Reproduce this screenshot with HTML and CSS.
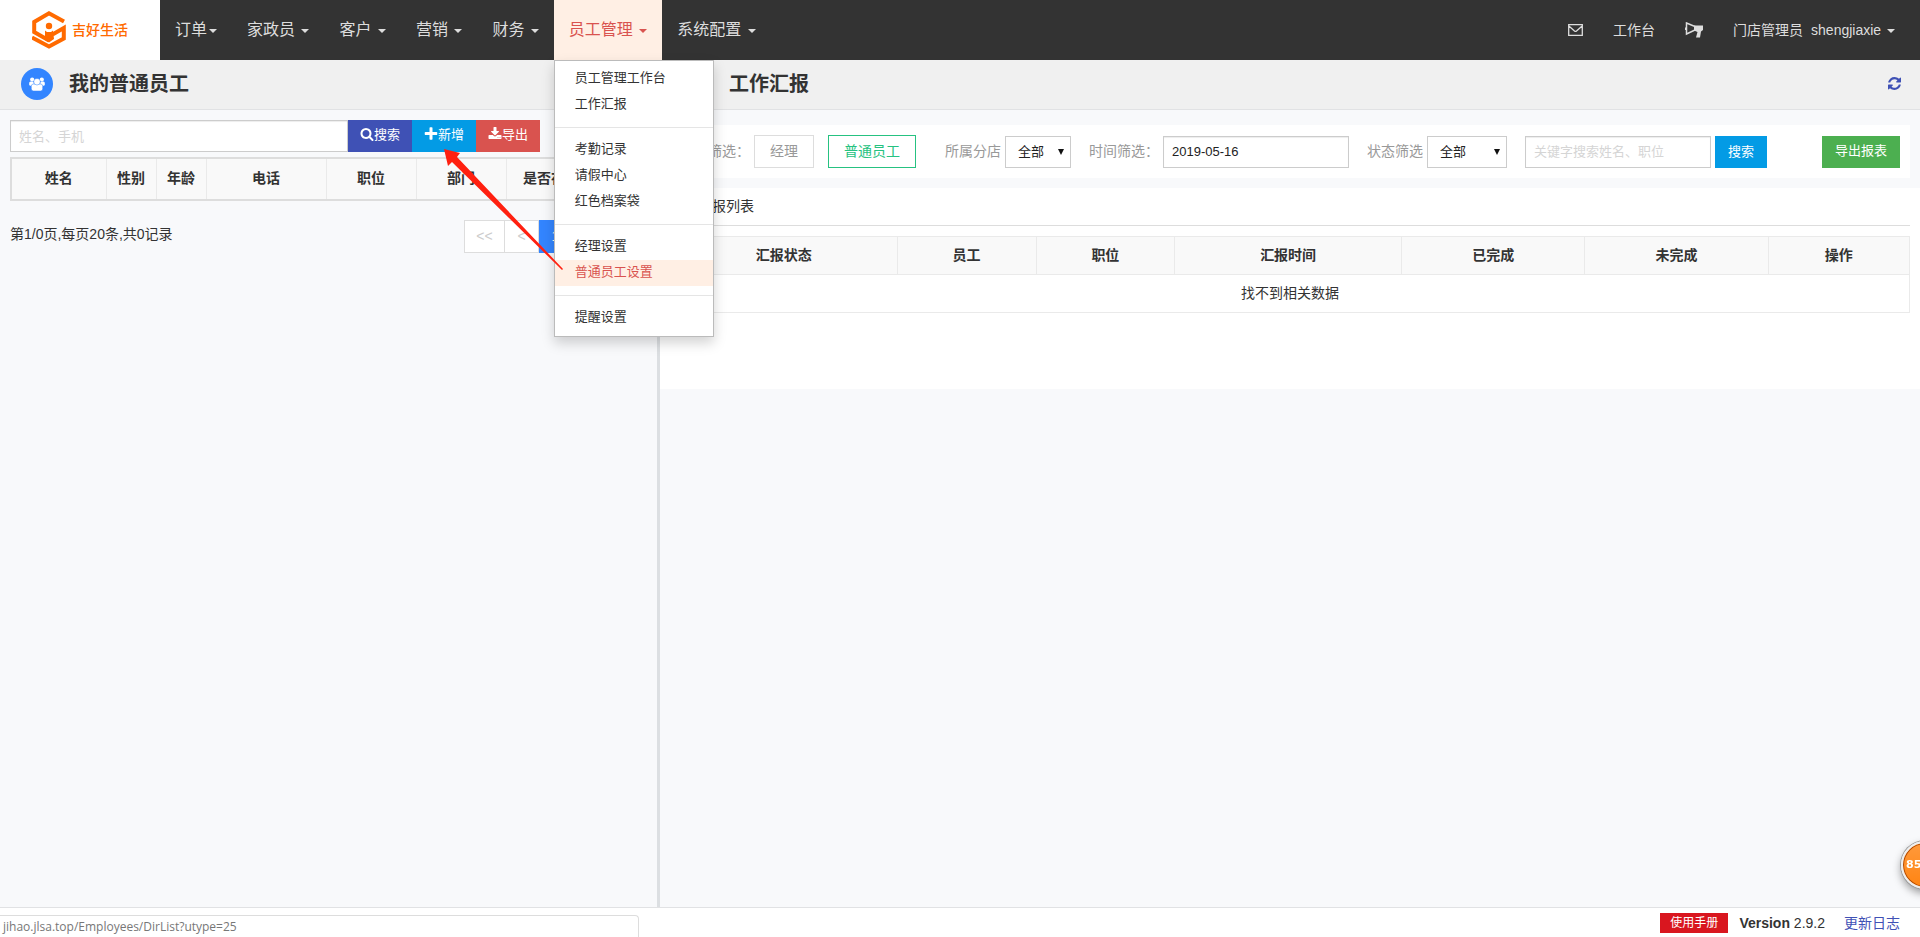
FILE: index.html
```html
<!DOCTYPE html>
<html lang="zh-CN">
<head>
<meta charset="utf-8">
<title>工作汇报</title>
<link rel="stylesheet" href="styles.css">
</head>
<body>
<header class="topbar">
  <a class="brand" href="#">
    <svg class="brand-mark" viewBox="0 0 34 38" aria-hidden="true">
      <path d="M32 10.500 17 2.300 2.200 11V21L17 29.500" fill="none" stroke="#ff6a00" stroke-width="4"/>
      <path d="M0 26.500 17 35.500 31.800 27.500V17L20.500 23.500" fill="none" stroke="#ff6a00" stroke-width="4"/>
      <circle cx="17" cy="15" r="3.200" fill="#ff6a00"/>
      <path d="M13 19.500 15 21H19L21 19.500 22 28 17 31.500 13 29Z" fill="#ff6a00"/>
    </svg>
    <span>吉好生活</span>
  </a>
  <nav class="menu">
    <a class="menu-item" href="#">订单<i class="caret"></i></a>
    <a class="menu-item" href="#">家政员 <i class="caret"></i></a>
    <a class="menu-item" href="#">客户 <i class="caret"></i></a>
    <a class="menu-item" href="#">营销 <i class="caret"></i></a>
    <a class="menu-item" href="#">财务 <i class="caret"></i></a>
    <div class="menu-group">
      <a class="menu-item active" href="#">员工管理 <i class="caret"></i></a>
      <div class="dropdown">
        <a href="#">员工管理工作台</a>
        <a href="#">工作汇报</a>
        <hr>
        <a href="#">考勤记录</a>
        <a href="#">请假中心</a>
        <a href="#">红色档案袋</a>
        <hr>
        <a href="#">经理设置</a>
        <a class="active" href="#">普通员工设置</a>
        <hr>
        <a href="#">提醒设置</a>
      </div>
    </div>
    <a class="menu-item" href="#">系统配置 <i class="caret"></i></a>
  </nav>
  <nav class="tools">
    <a href="#" aria-label="消息"><svg class="mail" viewBox="0 0 15 12"><path d="M.7 .7h13.600v10.600H.7zM.9 2l5.600 5q1 .8 2 0l5.600-5" fill="none" stroke="currentColor" stroke-width="1.300"/></svg></a>
    <a href="#">工作台</a>
    <a href="#" aria-label="公告"><svg class="horn" viewBox="0 0 18 16"><path d="M1.500 1 10 4.500V8L1.500 12Z" fill="none" stroke="currentColor" stroke-width="1.500"/><path d="M0 5.500h2v2.500H0zM9 3.500h9v4.500l-2 1.500-1 6h-4l1.500-5.500L9 8.500z" fill="currentColor"/></svg></a>
    <a class="account" href="#"><span>门店管理员</span><span>shengjiaxie <i class="caret"></i></span></a>
  </nav>
</header>

<main class="panes">
  <section class="pane staff">
    <div class="pane-head">
      <span class="round"><svg viewBox="0 0 16 14"><g fill="#fff"><circle cx="3.200" cy="2.500" r="2.100"/><circle cx="12.800" cy="2.500" r="2.100"/><rect x=".2" y="4.600" width="4.600" height="4.200" rx="1.500"/><rect x="11.200" y="4.600" width="4.600" height="4.200" rx="1.500"/></g><g fill="#fff" stroke="#3385ff" stroke-width=".5"><rect x="2.300" y="7" width="11.400" height="7" rx="2.200"/><circle cx="8" cy="4.700" r="3.300"/></g></svg></span>
      <h1>我的普通员工</h1>
    </div>
    <div class="staff-body">
      <form class="search-row">
        <input class="field grow" type="text" placeholder="姓名、手机" aria-label="姓名、手机">
        <button class="btn indigo" type="button"><svg viewBox="0 0 1792 1792"><path d="M1216 832q0-185-131.500-316.500t-316.500-131.500-316.500 131.500-131.500 316.500 131.500 316.500 316.500 131.500 316.500-131.500 131.500-316.500zm512 832q0 52-38 90t-90 38q-54 0-90-38l-343-342q-179 124-399 124-143 0-273.500-55.500t-225-150-150-225-55.500-273.500 55.500-273.500 150-225 225-150 273.500-55.500 273.500 55.500 225 150 150 225 55.500 273.500q0 220-124 399l343 343q37 37 37 90z"/></svg>搜索</button>
        <button class="btn blue" type="button"><svg viewBox="0 0 1792 1792"><path d="M1700 736v192q0 40-28 68t-68 28h-516v516q0 40-28 68t-68 28h-192q-40 0-68-28t-28-68v-516h-516q-40 0-68-28t-28-68v-192q0-40 28-68t68-28h516v-516q0-40 28-68t68-28h192q40 0 68 28t28 68v516h516q40 0 68 28t28 68z"/></svg>新增</button>
        <button class="btn red" type="button"><svg viewBox="0 0 1792 1792"><path d="M1344 1344q0-26-19-45t-45-19-45 19-19 45 19 45 45 19 45-19 19-45zm256 0q0-26-19-45t-45-19-45 19-19 45 19 45 45 19 45-19 19-45zm128-224v320q0 40-28 68t-68 28h-1472q-40 0-68-28t-28-68v-320q0-40 28-68t68-28h465l135 136q58 56 136 56t136-56l136-136h464q40 0 68 28t28 68zm-325-569q17 41-14 70l-448 448q-18 19-45 19t-45-19l-448-448q-31-29-14-70 17-39 59-39h256v-448q0-26 19-45t45-19h256q26 0 45 19t19 45v448h256q42 0 59 39z"/></svg>导出</button>
      </form>
      <table class="grid staff-grid">
        <colgroup><col class="w95"><col class="w50"><col class="w50"><col class="w120"><col class="w90"><col class="w90"><col class="w90"><col></colgroup>
        <thead><tr><th>姓名</th><th>性别</th><th>年龄</th><th>电话</th><th>职位</th><th>部门</th><th>是否在职</th><th>操作</th></tr></thead>
      </table>
      <div class="paging">
        <span>第1/0页,每页20条,共0记录</span>
        <div class="pager">
          <button type="button" class="wide" disabled>&lt;&lt;</button>
          <button type="button" disabled>&lt;</button>
          <button type="button" class="current">1</button>
          <button type="button" disabled>&gt;</button>
          <button type="button" class="wide" disabled>&gt;&gt;</button>
        </div>
      </div>
    </div>
  </section>

  <section class="pane report">
    <div class="pane-head">
      <h1>工作汇报</h1>
      <button class="refresh" type="button" aria-label="刷新"><svg viewBox="128 128 1536 1536"><path d="M1639 1056q0 5-1 7-64 268-268 434.500t-478 166.500q-146 0-282.500-55t-243.500-157l-129 129q-19 19-45 19t-45-19-19-45v-448q0-26 19-45t45-19h448q26 0 45 19t19 45-19 45l-137 137q71 66 161 102t187 36q134 0 250-65t186-179q11-17 53-117 8-23 30-23h192q13 0 22.500 9.500t9.500 22.500zm25-800v448q0 26-19 45t-45 19h-448q-26 0-45-19t-19-45 19-45l138-138q-148-137-349-137-134 0-250 65t-186 179q-11 17-53 117-8 23-30 23h-199q-13 0-22.500-9.500t-9.500-22.500v-7q65-268 270-434.500t480-166.500q146 0 284 55.500t245 156.500l130-129q19-19 45-19t45 19 19 45z"/></svg></button>
    </div>
    <form class="filters">
      <div class="filter roles">
        <span class="label">角色筛选：</span>
        <button class="choice" type="button">经理</button>
        <button class="choice chosen" type="button">普通员工</button>
      </div>
      <div class="filter branch">
        <label for="branch">所属分店</label>
        <span class="pick"><select id="branch"><option>全部</option></select></span>
      </div>
      <div class="filter">
        <label for="date">时间筛选：</label>
        <input class="field" id="date" type="text" value="2019-05-16">
      </div>
      <div class="filter">
        <label for="state">状态筛选</label>
        <span class="pick pick-wide"><select id="state"><option>全部</option></select></span>
      </div>
      <div class="filter">
        <input class="field" type="text" placeholder="关键字搜索姓名、职位" aria-label="关键字">
        <button class="btn blue small" type="button">搜索</button>
      </div>
      <button class="btn green" type="button">导出报表</button>
    </form>
    <div class="list">
      <h2>工作汇报列表</h2>
      <table class="grid report-grid">
        <colgroup><col class="c18"><col class="c11"><col class="c11"><col class="c18"><col class="c15"><col class="c15"><col></colgroup>
        <thead><tr><th>汇报状态</th><th>员工</th><th>职位</th><th>汇报时间</th><th>已完成</th><th>未完成</th><th>操作</th></tr></thead>
        <tbody><tr><td colspan="7">找不到相关数据</td></tr></tbody>
      </table>
    </div>
  </section>
</main>

<footer class="footer">
  <a class="manual" href="#">使用手册</a>
  <span><b>Version</b> 2.9.2</span>
  <a class="changes" href="#">更新日志</a>
</footer>

<div class="link-status">jihao.jlsa.top/Employees/DirList?utype=25</div>
<div class="score">85</div>
<svg class="pointer" viewBox="0 0 120 122" aria-hidden="true"><path d="M0 0 16 4 13 8 119 120 118 121 8 13 4 17Z" fill="#ff2010"/></svg>
</body>
</html>
```
FILE: styles.css
```css
* { box-sizing: border-box; }

body {
  margin: 0;
  min-height: 100vh;
  display: flex;
  flex-direction: column;
  background: #f8f9fb;
  color: #333;
  font: 14px/20px "Liberation Sans", "Noto Sans CJK SC", sans-serif;
}

a { color: inherit; text-decoration: none; }
button, input, select { font: inherit; }
button { cursor: pointer; }

.topbar {
  height: 60px;
  display: flex;
  background: #333;
  color: #ddd;
}

.brand {
  width: 160px;
  display: flex;
  align-items: center;
  justify-content: center;
  gap: 6px;
  background: #fff;
  color: #ff6a00;
  font-weight: 500;
}
.brand-mark { width: 34px; height: 38px; }

.menu { display: flex; }
.menu-group { position: relative; }
.menu-item {
  display: block;
  padding: 0 15px;
  font-size: 16px;
  line-height: 60px;
  white-space: nowrap;
}
.menu-item.active { background: #ffefe4; color: #d9534f; }

.caret {
  display: inline-block;
  margin-left: 2px;
  border: 4px solid transparent;
  border-top-color: currentColor;
  border-bottom: 0;
  vertical-align: middle;
}

.dropdown {
  position: absolute;
  z-index: 5;
  top: 100%;
  left: 0;
  width: 160px;
  padding: 5px 0;
  border: 1px solid #bbb;
  background: #fff;
  box-shadow: 0 6px 12px rgba(0, 0, 0, .175);
  color: #333;
  font-size: 13px;
}
.dropdown a { display: block; padding: 2px 20px 4px; }
.dropdown a.active { background: #ffefe4; color: #d9534f; }
.dropdown hr { height: 1px; margin: 9px 0; border: 0; background: #e5e5e5; }

.tools {
  display: flex;
  align-items: center;
  gap: 30px;
  margin-left: auto;
  padding-right: 25px;
}
.tools svg { display: block; }
.mail { width: 15px; height: 12px; }
.horn { width: 18px; height: 16px; }
.account { display: flex; gap: 8px; }

.panes { flex: 1; display: flex; }
.pane { display: flex; flex-direction: column; min-width: 0; }
.staff { width: 660px; border-right: 3px solid #dcdfe2; }
.report { flex: 1; }

.pane-head {
  height: 50px;
  display: flex;
  align-items: center;
  gap: 16px;
  padding: 0 19px 2px 21px;
  border-bottom: 1px solid #e1e2e4;
  background: #f0f0f0;
}
.pane-head h1 { margin: 0; font-size: 20px; line-height: 28px; }
.report .pane-head { padding-left: 69px; }
.round {
  width: 32px;
  height: 32px;
  display: grid;
  place-items: center;
  border-radius: 50%;
  background: #3385ff;
}
.round svg { width: 16px; height: 14px; }
.refresh { margin-left: auto; padding: 0; border: 0; background: none; }
.refresh svg { display: block; width: 13px; height: 13px; fill: #3f51b5; }

.staff-body { padding: 10px 9px 0 10px; }
.search-row { display: flex; width: 530px; }

.field {
  width: 186px;
  height: 32px;
  padding: 0 8px;
  border: 1px solid #ccc;
  background: #fff;
  box-shadow: inset 0 1px 1px rgba(0, 0, 0, .075);
  color: #222;
  font-size: 13px;
}
.field::placeholder { color: #d5d5d5; }
.grow { flex: 1; min-width: 0; }

.btn {
  height: 32px;
  padding: 0 12px 2px;
  border: 0;
  color: #fff;
  font-size: 13px;
  white-space: nowrap;
}
.btn svg { width: 14px; height: 14px; fill: currentColor; vertical-align: -2px; }
.indigo { background: #3f51b5; }
.blue { background: #039be5; }
.red { background: #d9534f; }
.green { margin-left: auto; padding: 0 13px 2px; background: #4caf50; }
.small { padding: 0 13px; }

.grid {
  width: 100%;
  border-collapse: collapse;
  table-layout: fixed;
  text-align: center;
}
.grid th, .grid td { height: 38px; padding: 0 0 2px; border: 1px solid #eaeaea; }
.grid th { background: #f9f9f9; white-space: nowrap; }
.staff-grid {
  margin-top: 5px;
  border: 2px solid #ddd;
}
.staff-grid th { height: 42px; }
.w95 { width: 95px; }
.w50 { width: 50px; }
.w120 { width: 120px; }
.w90 { width: 90px; }

.paging {
  display: flex;
  align-items: flex-start;
  justify-content: space-between;
  margin-top: 19px;
}
.paging span { padding-top: 4px; }
.pager { display: flex; }
.pager button {
  width: 34px;
  height: 33px;
  padding: 0 0 1px;
  border: 1px solid #ddd;
  border-left-width: 0;
  background: #fff;
  color: #ccc;
}
.pager .wide { width: 41px; }
.pager button:first-child { border-left-width: 1px; }
.pager .current { border-color: #3385ff; background: #3385ff; color: #fff; }

.filters {
  display: flex;
  align-items: center;
  gap: 18px;
  margin: 15px 10px 10px;
  padding: 10px;
  background: #fff;
}
.filter { display: flex; align-items: center; gap: 4px; color: #999; white-space: nowrap; }
.filter label, .filter .label { padding-bottom: 2px; }
.roles { gap: 14px; }
.roles .label { margin-right: -10px; }
.branch { margin-left: 11px; }
.choice {
  height: 33px;
  padding: 0 15px 1px;
  border: 1px solid #ddd;
  background: #fff;
  color: #999;
}
.chosen { border-color: #26c281; color: #26c281; }

.pick { position: relative; display: block; width: 66px; }
.pick-wide { width: 80px; }
.pick select {
  width: 100%;
  height: 32px;
  padding: 0 12px;
  appearance: none;
  border: 1px solid #ccc;
  border-radius: 0;
  background: #fff;
  color: #222;
  font-size: 13px;
}
.pick::after {
  content: "";
  position: absolute;
  top: 13px;
  right: 7px;
  border: 3px solid transparent;
  border-top: 6px solid #111;
  border-bottom: 0;
}

.list { padding: 0 10px 76px; background: #fff; }
.list h2 {
  margin: 0 0 10px;
  padding: 8px 0 9px;
  border-bottom: 1px solid #ddd;
  font-size: 14px;
  font-weight: 400;
}
.c18 { width: 18.300%; }
.c11 { width: 11.200%; }
.c15 { width: 14.800%; }

.footer {
  height: 30px;
  display: flex;
  align-items: center;
  justify-content: flex-end;
  gap: 11px;
  padding: 0 20px;
  border-top: 1px solid #e1e2e4;
  background: #fff;
}
.manual { padding: 0 10px; background: #d9161f; color: #fff; font-size: 12px; }
.changes { margin-left: 8px; color: #3f51b5; }

.link-status {
  position: fixed;
  z-index: 6;
  bottom: 0;
  left: 0;
  width: 639px;
  height: 22px;
  padding-left: 3px;
  border: 1px solid #ddd;
  border-width: 1px 1px 0 0;
  border-radius: 0 4px 0 0;
  background: #fff;
  color: #777;
  font: 12px/22px "Open Sans", "Noto Sans", sans-serif;
}

.score {
  position: fixed;
  z-index: 6;
  right: -29px;
  bottom: 48px;
  width: 48px;
  height: 48px;
  padding-left: 3px;
  border: 2px solid #eee;
  border-radius: 50%;
  background: linear-gradient(#ff9a3c, #ff8412);
  box-shadow: inset 0 0 0 1px #b34a00, 0 0 0 1px #999, 0 4px 8px rgba(0, 0, 0, .4);
  color: #fff;
  font: bold 11px/44px "DejaVu Sans", sans-serif;
}

.pointer {
  position: absolute;
  z-index: 7;
  top: 149px;
  left: 444px;
  width: 120px;
  height: 122px;
  pointer-events: none;
}
```
